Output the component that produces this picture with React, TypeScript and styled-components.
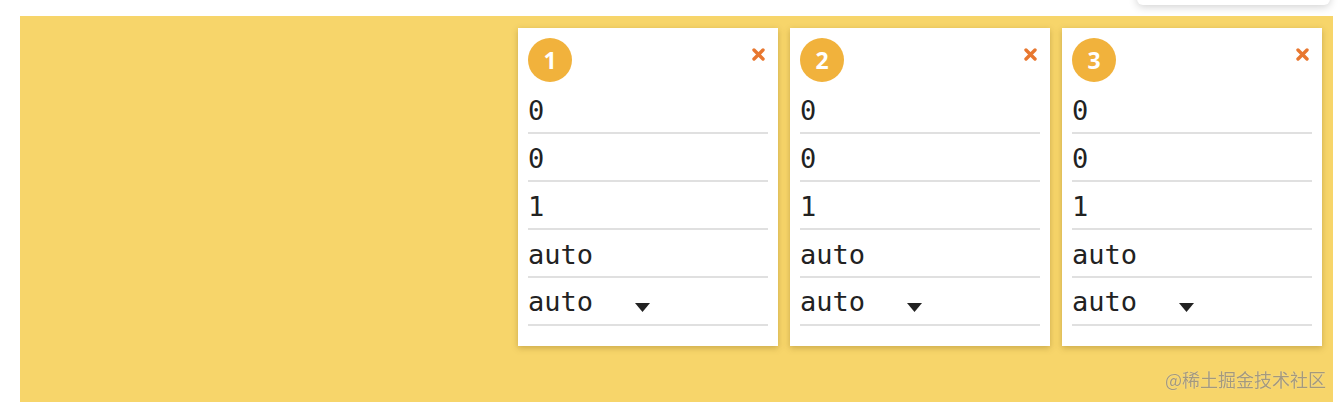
import React from 'react';
import styled, { createGlobalStyle } from 'styled-components';

const GlobalStyle = createGlobalStyle`
  html, body {
    margin: 0;
    padding: 0;
    background: #fff;
    overflow: hidden;
  }
  body {
    padding: 16px 7px 0 20px;
    font-family: 'DejaVu Sans Mono', monospace;
  }
`;

const Stage = styled.div`
  display: flex;
  justify-content: flex-end;
  align-items: flex-start;
  gap: 12px;
  height: calc(100vh - 16px);
  padding: 12px 11px;
  box-sizing: border-box;
  background: #f7d56a;
`;

const Card = styled.div`
  width: 260px;
  box-sizing: border-box;
  padding: 10px 10px 20px;
  background: #fff;
  box-shadow: 0 2px 6px rgba(120, 90, 20, 0.35);
`;

const CardHeader = styled.div`
  display: flex;
  justify-content: space-between;
  align-items: flex-start;
  height: 48px;
`;

const Badge = styled.span`
  display: flex;
  align-items: center;
  justify-content: center;
  width: 44px;
  height: 44px;
  border-radius: 50%;
  background: #f1b23c;
  color: #fff;
  font-family: 'Open Sans', 'Liberation Sans', sans-serif;
  font-weight: 700;
  font-size: 23px;
`;

const CloseButton = styled.button`
  display: flex;
  padding: 0;
  margin: 10px 3px 0 0;
  border: none;
  background: none;
  cursor: pointer;
`;

const Field = styled.input`
  display: block;
  width: 100%;
  height: 48px;
  box-sizing: border-box;
  padding: 3px 0 0;
  border: none;
  border-bottom: 2px solid #e0e0e0;
  outline: none;
  background: transparent;
  font-family: 'DejaVu Sans Mono', monospace;
  font-size: 27px;
  color: #222;
`;

const SelectRow = styled.div`
  position: relative;
  height: 48px;
  box-sizing: border-box;
  border-bottom: 2px solid #e0e0e0;
`;

const Select = styled.select`
  appearance: none;
  width: 128px;
  height: 46px;
  padding: 0;
  border: none;
  outline: none;
  background: transparent;
  font-family: 'DejaVu Sans Mono', monospace;
  font-size: 27px;
  color: #222;
`;

const Caret = styled.svg`
  position: absolute;
  left: 107px;
  top: 25px;
  pointer-events: none;
`;

const TopShade = styled.div`
  position: fixed;
  top: -40px;
  left: 1137px;
  width: 193px;
  height: 45px;
  background: #fff;
  border-radius: 6px;
  box-shadow: 0 2px 8px rgba(0, 0, 0, 0.18);
`;

const Watermark = styled.div`
  position: fixed;
  right: 14px;
  bottom: 11px;
  font-family: 'Noto Sans CJK SC', sans-serif;
  font-size: 18px;
  line-height: 24px;
  color: rgba(135, 125, 105, 0.75);
  text-shadow: 0 0 1px rgba(255, 255, 255, 0.6);
`;

const items = [1, 2, 3];
const values = ['0', '0', '1', 'auto'];

const App: React.FC = () => {
  return (
    <>
      <GlobalStyle />
      <TopShade />
      <Stage>
        {items.map((n) => (
          <Card key={n}>
            <CardHeader>
              <Badge>{n}</Badge>
              <CloseButton aria-label="remove">
                <svg width="13" height="13" viewBox="0 0 13 13">
                  <path d="M2 2 L11 11 M11 2 L2 11" stroke="#e8772f" strokeWidth="3.4" strokeLinecap="round" />
                </svg>
              </CloseButton>
            </CardHeader>
            {values.map((v, i) => (
              <Field key={i} defaultValue={v} />
            ))}
            <SelectRow>
              <Select defaultValue="auto">
                <option value="auto">auto</option>
                <option value="flex-start">flex-start</option>
                <option value="flex-end">flex-end</option>
                <option value="center">center</option>
                <option value="baseline">baseline</option>
                <option value="stretch">stretch</option>
              </Select>
              <Caret width="15" height="9" viewBox="0 0 15 9">
                <path d="M0 0 H15 L7.5 9 Z" fill="#222" />
              </Caret>
            </SelectRow>
          </Card>
        ))}
      </Stage>
      <Watermark>@稀土掘金技术社区</Watermark>
    </>
  );
};

export default App;
